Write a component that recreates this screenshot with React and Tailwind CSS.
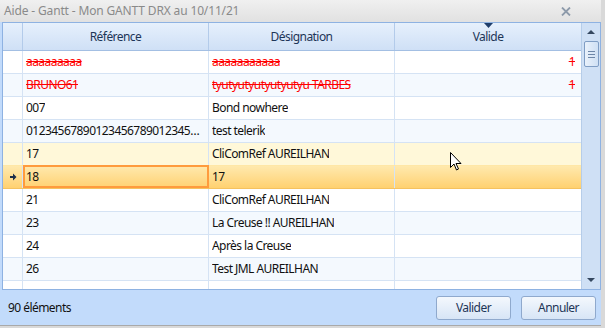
import React from 'react';

const rows = [
  { ref: 'aaaaaaaaa', des: 'aaaaaaaaaaa', val: '1', deleted: true },
  { ref: 'BRUNO61', des: 'tyutyutyutyutyutyu TARBES', val: '1', deleted: true },
  { ref: '007', des: 'Bond nowhere' },
  { ref: '0123456789012345678901234567890123456789', des: 'test telerik' },
  { ref: '17', des: 'CliComRef AUREILHAN', hover: true },
  { ref: '18', des: '17', current: true },
  { ref: '21', des: 'CliComRef AUREILHAN' },
  { ref: '23', des: 'La Creuse !! AUREILHAN' },
  { ref: '24', des: 'Après la Creuse' },
  { ref: '26', des: 'Test JML AUREILHAN' },
  { ref: '', des: '' },
];

function Row({ row, index }) {
  let rowBg = index % 2 === 1 ? 'bg-[#f4f9fe]' : 'bg-white';
  let border = 'border-[#d5e3f4]';
  if (row.hover) {
    rowBg = 'bg-[#fff8d9]';
    border = 'border-[#ffe7a6]';
  }
  if (row.current) {
    rowBg = 'bg-gradient-to-b from-[#ffe9ad] to-[#ffd170]';
    border = 'border-[#f5c260]';
  }
  const txt = row.deleted ? 'text-[#ff0000] line-through' : 'text-[#111]';

  return (
    <div className={`flex h-[23px] shrink-0 border-b ${border} ${rowBg}`}>
      <div className="w-[20px] shrink-0 border-r border-[#d5e3f4] flex items-center justify-center">
        {row.current && (
          <svg width="8" height="8" viewBox="0 0 8 8">
            <path d="M1 3h3V0.5L7.5 4 4 7.5V5H1z" fill="#1e2e4a" />
          </svg>
        )}
      </div>
      <div className={`w-[186px] shrink-0 flex items-center ${row.current ? 'border-2 border-[#ff9b3d] -mt-px h-[23px] px-[1px]' : 'border-r border-[#d5e3f4] px-[3px]'}`}>
        <span className={`truncate ${txt}`}>{row.ref}</span>
      </div>
      <div className="w-[186px] shrink-0 flex items-center px-[3px] border-r border-[#d5e3f4]">
        <span className={`truncate ${txt}`}>{row.des}</span>
      </div>
      <div className="w-[186px] shrink-0 flex items-center justify-end px-[6px]">
        {row.val && <span className={txt}>{row.val}</span>}
      </div>
    </div>
  );
}

export default function App() {
  return (
    <div className="w-[605px] h-[328px] flex bg-[#d9d9d9] text-[12px] tracking-[-0.55px] overflow-hidden" style={{ fontFamily: '"Noto Sans", "Open Sans", sans-serif' }}>
      <div className="w-[601px] h-[326px] flex flex-col bg-[#c2dbfb] border-b border-[#a9a9a9]">
        {/* barre de titre */}
        <div className="h-[22px] shrink-0 flex items-center justify-between pl-[4px] pr-[30px] bg-gradient-to-b from-[#f0f0f0] to-[#e1e1e1]">
          <span className="text-[#8a8a8a] text-[12px] tracking-[-0.15px]">Aide - Gantt - Mon GANTT DRX au 10/11/21</span>
          <svg width="10" height="9" viewBox="0 0 10 9">
            <path d="M1 0.5l8 8M9 0.5l-8 8" stroke="#8d9aaa" strokeWidth="1.8" />
          </svg>
        </div>

        {/* grille */}
        <div className="ml-[2px] w-[599px] h-[268px] shrink-0 flex border border-[#8eb2e2] bg-white">
          <div className="flex flex-col w-[578px] shrink-0">
            <div className="h-[28px] shrink-0 flex border-b border-[#a3bfe3] bg-gradient-to-b from-[#e6f0fc] to-[#cfe0f6] text-[#1d3557]">
              <div className="w-[20px] shrink-0 border-r border-[#b3cbea]" />
              <div className="w-[186px] shrink-0 border-r border-[#b3cbea] flex items-center justify-center">Référence</div>
              <div className="w-[186px] shrink-0 border-r border-[#b3cbea] flex items-center justify-center">Désignation</div>
              <div className="w-[186px] shrink-0 relative flex items-center justify-center">
                <svg className="absolute top-0 left-[89px]" width="9" height="5" viewBox="0 0 9 5">
                  <path d="M0 0h9L4.5 5z" fill="#1f3e6b" />
                </svg>
                Valide
              </div>
            </div>
            <div className="flex-1 flex flex-col overflow-hidden">
              {rows.map((row, i) => (
                <Row key={i} row={row} index={i} />
              ))}
            </div>
          </div>

          {/* barre de défilement */}
          <div className="w-[19px] shrink-0 flex flex-col items-center bg-[#cfe0f5] border-l border-[#b6cde9]">
            <div className="h-[18px] flex items-center justify-center">
              <svg width="8" height="4" viewBox="0 0 8 4"><path d="M0 4h8L4 0z" fill="#34475f" /></svg>
            </div>
            <div className="w-[15px] h-[26px] rounded-[2px] border border-[#7f9dc4] bg-gradient-to-r from-[#e9f1fb] to-[#cfe0f4] flex flex-col items-center justify-center gap-[2px]">
              <div className="w-[7px] h-px bg-[#6d86a8]" />
              <div className="w-[7px] h-px bg-[#6d86a8]" />
              <div className="w-[7px] h-px bg-[#6d86a8]" />
            </div>
            <div className="flex-1" />
            <div className="h-[18px] flex items-center justify-center">
              <svg width="8" height="4" viewBox="0 0 8 4"><path d="M0 0h8L4 4z" fill="#34475f" /></svg>
            </div>
          </div>
        </div>

        {/* pied */}
        <div className="flex-1 flex items-center justify-between pl-[8px] pr-[5px]">
          <span className="text-[#111] pt-[1px]">90 éléments</span>
          <div className="flex gap-[10px]">
            <button className="w-[75px] h-[24px] rounded-[3px] border border-[#8fa9cd] bg-gradient-to-b from-[#f4f8fd] to-[#d7e5f6] text-[#1d3557]">Valider</button>
            <button className="w-[75px] h-[24px] rounded-[3px] border border-[#8fa9cd] bg-gradient-to-b from-[#f4f8fd] to-[#d7e5f6] text-[#1d3557]">Annuler</button>
          </div>
        </div>
      </div>

      {/* curseur */}
      <svg className="absolute left-[450px] top-[152px]" width="12" height="19" viewBox="0 0 12 19">
        <path d="M0.5 0.5v15l3.5-3.5 2.5 6 2-1-2.5-5.5h5z" fill="#fff" stroke="#000" strokeWidth="1" />
      </svg>
    </div>
  );
}
